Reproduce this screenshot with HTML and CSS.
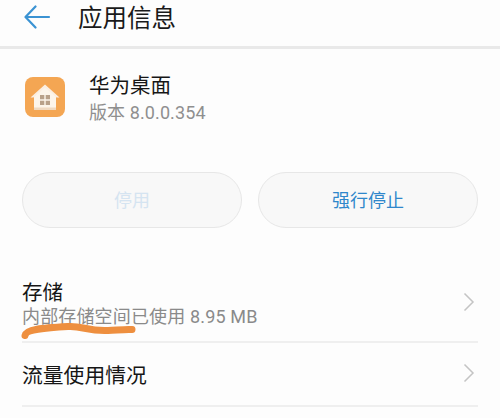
FILE: index.html
```html
<!DOCTYPE html>
<html lang="zh">
<head>
<meta charset="utf-8">
<title>应用信息</title>
<link rel="stylesheet" href="styles.css">
</head>
<body>
<div class="page">
  <header class="topbar">
    <svg class="back" width="28" height="28" viewBox="0 0 28 28"><path d="M11.5 3.5 1.5 14l10 10.5M2 14h23" fill="none" stroke="#3b93d3" stroke-width="2.2" stroke-linecap="round" stroke-linejoin="round"/></svg>
    <h1 class="title">应用信息</h1>
  </header>
  <section class="app">
    <svg class="app-icon" width="40" height="40" viewBox="0 0 40 40">
      <rect width="40" height="40" rx="8" fill="#f4a653"/>
      <path d="M20 7.500 34.500 20.500 31.500 20.500 31 20 20 11.500 9 20 8.500 20.500 5.500 20.500Z" fill="#fbeee0"/>
      <path d="M20 10.500 31 19.500V33H9V19.500Z" fill="#fdf5ea"/>
      <path d="M9 30.500H31V33H9Z" fill="#f0d9c0"/>
      <path d="M15 18h4.300v4.300H15ZM20.700 18H25v4.300h-4.300ZM15 23.700h4.300V28H15ZM20.700 23.700H25V28h-4.300Z" fill="#b9a189"/>
    </svg>
    <div class="app-text">
      <div class="app-name">华为桌面</div>
      <div class="app-version">版本 8.0.0.354</div>
    </div>
  </section>
  <section class="actions">
    <button class="pill pill-off">停用</button>
    <button class="pill">强行停止</button>
  </section>
  <section class="list">
    <div class="row row-storage">
      <div class="row-text">
        <div class="row-title">存储</div>
        <div class="row-sub">内部存储空间已使用 8.95 MB</div>
      </div>
      <svg class="chev" width="12" height="20" viewBox="0 0 12 20"><path d="M1.500 1.500 10 10l-8.500 8.500" fill="none" stroke="#c4c4c4" stroke-width="1.500"/></svg>
      <svg class="scribble" width="122" height="24" viewBox="0 0 122 24"><path d="M5 16.500C6 10 22 9 48 7.500C62 6.500 68 12.500 88 11.500C98 11 106 10 112 10.500" fill="none" stroke="#ee8f3f" stroke-width="7" stroke-linecap="round" stroke-linejoin="round"/></svg>
    </div>
    <div class="row row-traffic">
      <div class="row-title row-title-lg">流量使用情况</div>
      <svg class="chev" width="12" height="20" viewBox="0 0 12 20"><path d="M1.500 1.500 10 10l-8.500 8.500" fill="none" stroke="#c4c4c4" stroke-width="1.500"/></svg>
    </div>
  </section>
</div>
</body>
</html>
```
FILE: styles.css
```css
* { box-sizing: border-box; }
html, body { margin: 0; padding: 0; }
body {
  width: 500px;
  height: 418px;
  overflow: hidden;
  background: #fdfdfd;
  font-family: "Noto Sans CJK SC", "Roboto", sans-serif;
}
.page { display: flex; flex-direction: column; }
.topbar {
  height: 49px;
  padding: 0 0 13px 24px;
  display: flex;
  align-items: center;
  gap: 26px;
  border-bottom: 3px solid #e9e9e9;
  background: #fdfdfd;
}
.back { flex: none; }
.title {
  margin: 0;
  font-size: 24.500px;
  font-weight: 400;
  line-height: 30px;
  color: #1a1a1a;
}
.app {
  padding: 28px 22px 0 25px;
  display: flex;
  gap: 24px;
  height: 123px;
}
.app-icon { flex: none; }
.app-text { margin-top: -8px; }
.app-name { font-size: 20.500px; line-height: 30px; color: #161616; }
.app-version { font-size: 18px; line-height: 28px; letter-spacing: 0.1px; color: #8f8f8f; font-family: "Roboto", "Noto Sans CJK SC", sans-serif; }
.actions {
  padding: 0 22px;
  display: flex;
  gap: 16px;
}
.pill {
  flex: 1;
  height: 56px;
  border: 1.500px solid #e7e7e7;
  border-radius: 28px;
  background: #f8f8f8;
  color: #2f87cb;
  font-family: inherit;
  font-size: 18px;
  padding: 0 0 2px;
}
.pill-off { color: #d5e4f1; }
.list { padding: 0 22px; margin-top: 44px; }
.row {
  position: relative;
  display: flex;
  align-items: center;
  justify-content: space-between;
  border-bottom: 2px solid #efefef;
  padding-right: 3px;
}
.row-storage { height: 71px; padding-bottom: 8px; }
.row-traffic { height: 64px; }
.row-title { font-size: 20.500px; line-height: 28px; color: #161616; }
.row-title-lg { font-size: 20.800px; }
.row-sub { font-size: 18px; line-height: 24px; letter-spacing: 0.15px; color: #8a8a8a; font-family: "Roboto", "Noto Sans CJK SC", sans-serif; }
.chev { flex: none; margin-bottom: 2px; }
.scribble { position: absolute; left: -2px; top: 47px; }
```
